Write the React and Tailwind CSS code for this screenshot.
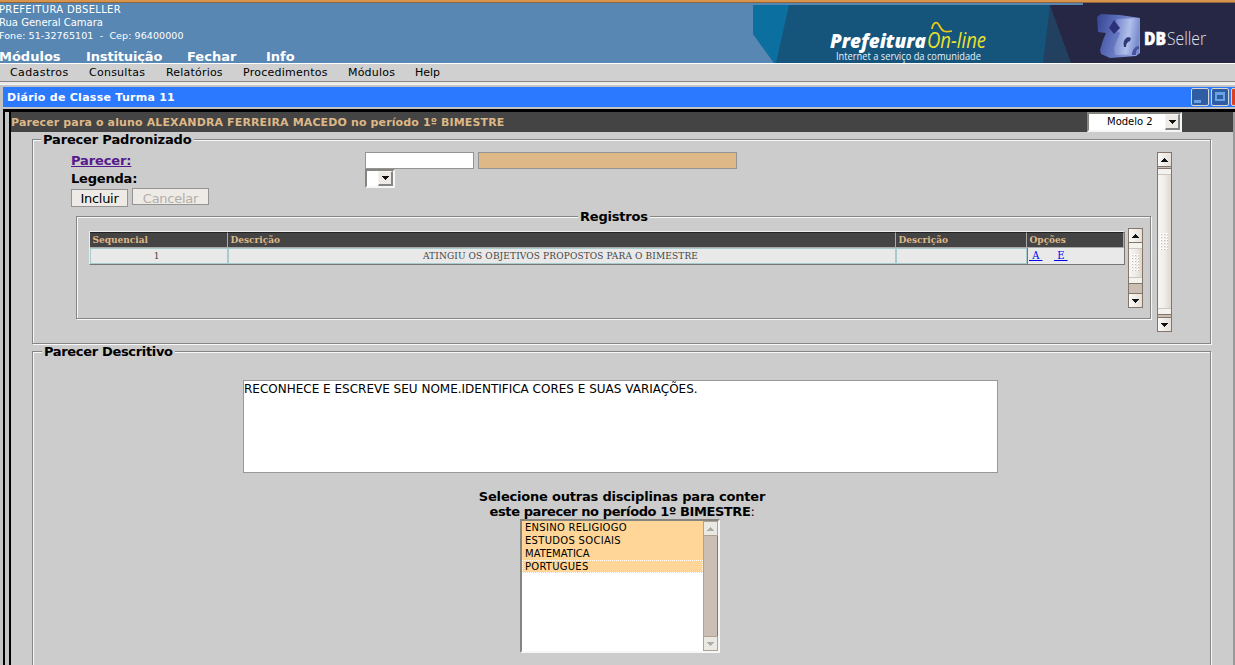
import React from "react";

const inset = "border-2 border-t-[#85857f] border-l-[#85857f] border-r-[#f6f6f6] border-b-[#f6f6f6]";

function Arrow({ up, color = "#111" }) {
  return (
    <svg width="7" height="4" viewBox="1 0 7 4" shapeRendering="crispEdges" className="block shrink-0">
      <path d={up ? "M4 0h1v1h1v1h1v1h1v1H1V3h1V2h1V1h1z" : "M1 0h7v1H7v1H6v1H5v1H4V3H3V2H2V1H1z"} fill={color} />
    </svg>
  );
}

function ScrollButton({ up, muted }) {
  return (
    <div className={muted ? "flex h-[15px] shrink-0 items-center justify-center border border-[#b0a292] bg-[#ebe9e4]" : "flex h-[15px] shrink-0 items-center justify-center border border-[#857468] bg-linear-to-r from-[#fbf9f7] to-[#e6e0da]"}>
      <Arrow up={up} color={muted ? "#b0aca6" : "#111"} />
    </div>
  );
}

function Scrollbar({ height, gap }) {
  return (
    <div className={"flex w-[15px] shrink-0 flex-col bg-[#cbbfb5] shadow-[inset_1px_0_0_#857468,inset_-1px_0_0_#857468] " + height}>
      <ScrollButton up />
      <div className={"flex flex-1 flex-col items-stretch justify-between border border-[#857468] bg-linear-to-r from-[#f8f6f3] via-[#f0ece8] to-[#ded6ce] " + gap}>
        <div className="h-[6px] border-b border-[#cbc6c0] bg-[#f4f2ef]" />
        <svg width="9" height="18" shapeRendering="crispEdges" className="mx-auto block">
          {[0, 3, 6, 9, 12, 15].map((y) =>
            [0, 3, 6].map((x) => (
              <g key={x + "-" + y}>
                <rect x={x} y={y} width="2" height="2" fill="#fff" />
                <rect x={x + 1} y={y + 1} width="1" height="1" fill="#c4bcb4" />
              </g>
            )),
          )}
        </svg>
        <div className="h-[6px] border-t border-[#cbc6c0] bg-[#f4f2ef]" />
      </div>
      <ScrollButton />
    </div>
  );
}

function Fieldset({ legend, className, legendClass, children }) {
  return (
    <section className={"relative border border-[#858585] shadow-[1px_1px_0_#f8f8f8,inset_1px_1px_0_#f8f8f8] " + className}>
      <h2 className={"absolute -top-[5px] h-[9px] bg-[#cccccc] pr-[2px] pl-[2px] text-[13px] leading-[9px] font-bold whitespace-nowrap " + legendClass}>{legend}</h2>
      {children}
    </section>
  );
}

function Banner() {
  return (
    <svg width="482" height="60" viewBox="753 3 482 60" className="ml-auto block shrink-0">
      <defs>
        <linearGradient id="cube" x1="0" y1="0" x2="1" y2="0.3">
          <stop offset="0" stopColor="#35448f" />
          <stop offset="0.45" stopColor="#5c6dba" />
          <stop offset="1" stopColor="#8fa0dc" />
        </linearGradient>
        <linearGradient id="cubeFront" x1="0" y1="0" x2="1" y2="0.2">
          <stop offset="0" stopColor="#6475c2" />
          <stop offset="0.65" stopColor="#b0c0ea" />
          <stop offset="1" stopColor="#7a8bcf" />
        </linearGradient>
      </defs>
      <rect x="753" y="5" width="482" height="58" fill="#15557c" />
      <path d="M753 5h36l-13 58h-2l-21-29z" fill="#0b6f9f" />
      <path d="M753 34l21 29h-21z" fill="#5887b3" />
      <path d="M1050 5l-7 58h40V5z" fill="#22405f" />
      <path d="M1050 5h33V3h152v60H1071z" fill="#262744" />
      <path d="M1097 17L1101 14L1120 15L1140 18L1140 53L1136 56L1110 58L1101 54L1100 50L1103 40L1106 33L1098 32Z" fill="url(#cube)" />
      <path d="M1117 19L1140 18L1139 54L1116 55C1111 48 1118 40 1120 33L1112 28Z" fill="url(#cubeFront)" />
      <path d="M1114 20l6 8-6 6-5-6z" fill="#2d317a" />
      <path d="M1124 47c-1-5 0-8 4-10l3 1-1 3c-3 1-4 3-4 6z" fill="#2f3978" />
      <path d="M1132 55c0-5 3-9 7-9v3c-3 0-3 3-3 6z" fill="#46549c" />
      <text x="830" y="48" fill="#fff" fontFamily="Open Sans" fontSize="20" fontWeight="800" fontStyle="italic" textLength="96" lengthAdjust="spacingAndGlyphs">Prefeitura</text>
      <text x="927" y="48" fill="#ede12e" fontFamily="Open Sans" fontSize="21" fontStyle="italic" textLength="59" lengthAdjust="spacingAndGlyphs">On-line</text>
      <path d="M932 29c1-7 5-8 7-4 3 6 5 8 13 6" fill="none" stroke="#e9c81c" strokeWidth="1.7" />
      <text x="836" y="59.5" fill="#e8f2f8" fontFamily="Open Sans" fontSize="10" fontWeight="500" textLength="145" lengthAdjust="spacingAndGlyphs">Internet a serviço da comunidade</text>
      <text x="1144" y="44.5" fill="#fff" stroke="#fff" strokeWidth=".5" fontFamily="Open Sans" fontSize="18" fontWeight="800" textLength="22" lengthAdjust="spacingAndGlyphs">DB</text>
      <text x="1167" y="44.5" fill="#e2e2ea" fontFamily="Open Sans" fontSize="18" fontWeight="300" textLength="39" lengthAdjust="spacingAndGlyphs">Seller</text>
    </svg>
  );
}

const topMenu = [
  ["Módulos", "w-[87px]"],
  ["Instituição", "w-[101px] tracking-[-0.15px]"],
  ["Fechar", "w-[79px]"],
  ["Info", "w-[40px]"],
];
const subMenu = [
  ["Cadastros", "w-[79px] tracking-[0.4px]"],
  ["Consultas", "w-[77px] tracking-[0.25px]"],
  ["Relatórios", "w-[77px] tracking-[0.2px]"],
  ["Procedimentos", "w-[105px] tracking-[0.25px]"],
  ["Módulos", "w-[67px] tracking-[0.2px]"],
  ["Help", "w-[40px]"],
];

function Header() {
  return (
    <>
      <div className="h-[3px] border-b border-[#8d643b] bg-[#d8934c]" />
      <header className="flex h-[60px] bg-[#5887b3] text-white">
        <div className="-ml-px flex flex-col whitespace-nowrap">
          <div className="text-[10px] leading-[13px]">
            <p className="tracking-[0.33px]">PREFEITURA DBSELLER</p>
            <p>Rua General Camara</p>
            <p className="text-[9.5px] tracking-[0.09px] whitespace-pre">Fone: 51-32765101  -  Cep: 96400000</p>
          </div>
          <nav className="mt-[6px] flex text-[13px] leading-[17px] font-bold">
            {topMenu.map(([t, w]) => <span key={t} className={w}>{t}</span>)}
          </nav>
        </div>
        <Banner />
      </header>
      <nav className="flex h-[19px] border-t border-b border-t-white border-b-[#888] bg-[#d0d0d0] pl-[10px] text-[11px] leading-[17px] whitespace-nowrap">
        {subMenu.map(([t, w]) => <span key={t} className={w}>{t}</span>)}
      </nav>
      <div className="h-[3px] border-b border-[#f5f5f5] bg-[#e8e8e8]" />
    </>
  );
}

function WindowButton({ kind }) {
  return (
    <svg width="18" height="18" viewBox="0 0 18 18" className="block shrink-0">
      <rect x=".5" y=".5" width="17" height="17" rx="1.5" fill={kind === "close" ? "#d8401f" : "#2f5da3"} stroke="#d9d5d0" />
      {kind === "min" && <rect x="3" y="12" width="7" height="3" fill="#69a3e6" />}
      {kind === "max" && <path d="M4 4h10v9H4zM6 7v4h6V7z" fill="#69a3e6" fillRule="evenodd" />}
    </svg>
  );
}

function Select({ children, className }) {
  return (
    <div className={"flex bg-white text-[10px] leading-[15px] font-normal " + inset + " " + className}>
      <span className="min-w-0 flex-1 whitespace-nowrap">{children}</span>
      <span className="flex w-[15px] shrink-0 items-center justify-center border-t border-l border-r-2 border-b-2 border-t-[#f6f4f1] border-l-[#f6f4f1] border-r-[#858585] border-b-[#858585] bg-[#eeebe7]"><Arrow /></span>
    </div>
  );
}

function Standard() {
  return (
    <Fieldset legend="Parecer Padronizado" className="mt-[7px] ml-[21px] h-[205px] w-[1179px]" legendClass="left-[8px] tracking-[-0.16px]">
      <div className="flex pt-[12px]">
        <div className="w-[1124px]">
          <div className="flex h-[18px] pl-[38px] text-[13px] leading-[18px] font-bold">
            <span className="w-[294px]"><a className="tracking-[-0.12px] text-[#551a8b] underline" href="#parecer">Parecer:</a></span>
            <span className="h-[17px] w-[109px] border border-[#949494] bg-white" />
            <span className="ml-[4px] h-[17px] w-[259px] border border-[#949494] bg-[#deb887]" />
          </div>
          <div className="flex h-[18px] pl-[38px] text-[13px] leading-[18px] font-bold">
            <span className="w-[294px] tracking-[-0.2px]">Legenda:</span>
            <Select className="-mt-px h-[19px] w-[30px]" />
          </div>
          <div className="flex gap-1 pl-[38px] text-[13px] leading-[18px]">
            <button className="mt-px h-[18px] w-[57px] border border-[#949494] bg-[#eeebe7] tracking-[-0.3px]">Incluir</button>
            <button className="h-[17px] w-[77px] border border-[#949494] bg-[#eeebe7] tracking-[-0.25px] text-[#b2aea9]"><span className="block pt-px">Cancelar</span></button>
          </div>
          <Fieldset legend="Registros" className="mt-[9px] ml-[43px] h-[103px] w-[1075px]" legendClass="left-[501px] tracking-[-0.2px]">
            <div className="flex items-start pt-[11px] pl-[12px]">
              <Table />
              <div className="ml-[3px]"><Scrollbar height="h-[80px]" gap="mb-[9px] -mt-px" /></div>
            </div>
          </Fieldset>
        </div>
        <Scrollbar height="h-[180px]" gap="mt-px mb-[2px]" />
      </div>
    </Fieldset>
  );
}

const columns = ["Sequencial", "Descrição", "Descrição", "Opções"];

function Table() {
  const grid = "grid grid-cols-[138px_668px_131px_97px]";
  const cell = "border border-[#a8cccc]";
  return (
    <div className="mt-[3px] w-[1036px] border-t border-r border-b border-l border-t-[#eee] border-r-[#777] border-b-[#777] border-l-[#eee] font-['DejaVu_Serif',serif] text-[10px]">
      <div className={grid + " h-[16px] border-b border-[#aaa] bg-[#444] leading-[15px] font-bold text-[#deb887]"}>
        {columns.map((c, i) => <span key={i} className="border-t border-r border-t-[#222] border-r-[#aaa] pl-[2.5px] font-['DejaVu_Serif_Condensed','DejaVu_Serif',serif] leading-[14px] [font-stretch:condensed]">{c}</span>)}
      </div>
      <div className={grid + " h-[16px] bg-[#e9e9e9] text-center font-['DejaVu_Serif_Condensed','DejaVu_Serif',serif] leading-[14px] text-[#444] [font-stretch:condensed]"}>
        <span className={cell + " pr-[5px]"}>1</span>
        <span className={cell + " pr-[3px] tracking-[0.13px]"}>ATINGIU OS OBJETIVOS PROPOSTOS PARA O BIMESTRE</span>
        <span className={cell} />
        <span className="flex border-l border-[#777] pt-px text-[11px] whitespace-pre text-[#0000ee]">
          <a className="ml-px mr-[12px] w-[13px] text-center underline" href="#a">&nbsp;A&nbsp;</a>
          <a className="w-[13px] text-center underline" href="#e">&nbsp;E&nbsp;</a>
        </span>
      </div>
    </div>
  );
}

const subjects = [
  ["ENSINO RELIGIOGO", "tracking-[0.27px]"],
  ["ESTUDOS SOCIAIS", "tracking-[0.3px]"],
  ["MATEMATICA", ""],
  ["PORTUGUES", "tracking-[0.25px]"],
];

function Descriptive() {
  return (
    <Fieldset legend="Parecer Descritivo" className="mt-[7px] ml-[21px] h-[340px] w-[1179px]" legendClass="left-[9px] tracking-[-0.33px]">
      <div className="mt-[28px] ml-[210px] h-[93px] w-[755px] border border-[#999] bg-white pt-px text-[12px] leading-[15px]">
        RECONHECE E ESCREVE SEU NOME.IDENTIFICA CORES E SUAS VARIAÇÕES.
      </div>
      <div className="mt-[16px] ml-[439px] w-[300px] text-center text-[13px] leading-[15px] font-bold whitespace-nowrap">
        <p className="tracking-[-0.2px]">Selecione outras disciplinas para conter</p>
        <p className="tracking-[-0.4px]">este parecer no período 1º BIMESTRE<span className="font-normal">:</span></p>
      </div>
      <div className={"ml-[487px] flex h-[134px] w-[200px] bg-white " + inset}>
        <ul className="flex-1 text-[10px] leading-[13px]">
          {subjects.map(([s, t]) => (
            <li key={s} className={"h-[13px] border-dotted border-[#fff] bg-[#ffd698] pl-[3px] last:border last:pl-[2px] last:leading-[11px] " + t}>{s}</li>
          ))}
        </ul>
        <div className="flex w-[15px] flex-col bg-[#cbbfb5]">
          <ScrollButton up muted />
          <div className="flex-1 border-x border-[#b0a292] border-r-[#857468]" />
          <ScrollButton muted />
        </div>
      </div>
    </Fieldset>
  );
}

export default function App() {
  return (
    <div className="flex h-[665px] w-[1235px] flex-col overflow-hidden bg-[#c3c3c3] font-['DejaVu_Sans',sans-serif] text-black">
      <Header />
      <div className="flex h-[24px] shrink-0 items-stretch border-t-2 border-b-2 border-[#c3c3c3] pl-[3px]">
        <div className="flex flex-1 items-center overflow-hidden bg-[#2b79ff] pl-1 text-[11px] font-bold text-white">
          <span className="w-[1184px] shrink-0 pt-[2px] tracking-[0.27px]">Diário de Classe Turma 11</span>
          <div className="flex shrink-0 gap-[2px]">
            <WindowButton kind="min" />
            <WindowButton kind="max" />
            <WindowButton kind="close" />
          </div>
        </div>
      </div>
      <div className="ml-[3px] flex h-[556px] shrink-0 border-t-[3px] border-l-2 border-black bg-[#c3c3c3] pl-1">
        <main className="h-[553px] w-[1224px] overflow-hidden border-l-2 border-black bg-[#cccccc]">
          <div className="flex h-[20px] bg-[#444] text-[11px] leading-[20px] font-bold text-[#deb887]">
            <h1 className="w-[1076px] pt-px tracking-[0.13px]">Parecer para o aluno ALEXANDRA FERREIRA MACEDO no período 1º BIMESTRE</h1>
            <Select className="h-[20px] w-[95px] text-black"><span className="pl-[18px]">Modelo 2</span></Select>
          </div>
          <Standard />
          <Descriptive />
        </main>
        <div className="w-[2px] bg-[#999]" />
      </div>
    </div>
  );
}
